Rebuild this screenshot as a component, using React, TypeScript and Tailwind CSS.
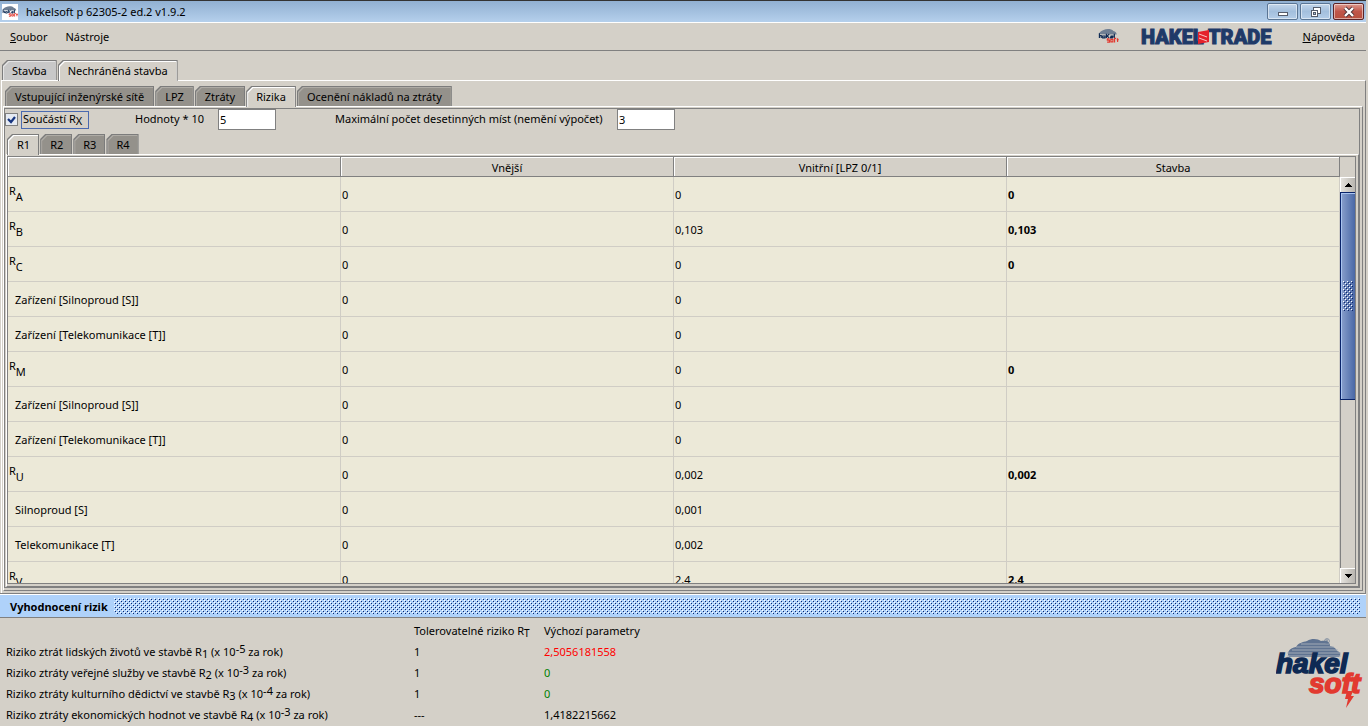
import React, { useId, useState } from "react";

type Risk = {
  label: string;
  sub?: string;
  outer: string;
  inner: string;
  total: string;
};

const ROWS: Risk[] = [
  { label: "R", sub: "A", outer: "0", inner: "0", total: "0" },
  { label: "R", sub: "B", outer: "0", inner: "0,103", total: "0,103" },
  { label: "R", sub: "C", outer: "0", inner: "0", total: "0" },
  { label: "Zařízení [Silnoproud [S]]", outer: "0", inner: "0", total: "" },
  { label: "Zařízení [Telekomunikace [T]]", outer: "0", inner: "0", total: "" },
  { label: "R", sub: "M", outer: "0", inner: "0", total: "0" },
  { label: "Zařízení [Silnoproud [S]]", outer: "0", inner: "0", total: "" },
  { label: "Zařízení [Telekomunikace [T]]", outer: "0", inner: "0", total: "" },
  { label: "R", sub: "U", outer: "0", inner: "0,002", total: "0,002" },
  { label: "Silnoproud [S]", outer: "0", inner: "0,001", total: "" },
  { label: "Telekomunikace [T]", outer: "0", inner: "0,002", total: "" },
  { label: "R", sub: "V", outer: "0", inner: "2,4", total: "2,4" },
];

const SUMMARY = [
  { text: "Riziko ztrát lidských životů ve stavbě R", n: "1", exp: "-5", tol: "1", val: "2,5056181558", color: "text-[#ff0000]" },
  { text: "Riziko ztráty veřejné služby ve stavbě R", n: "2", exp: "-3", tol: "1", val: "0", color: "text-[#008000]" },
  { text: "Riziko ztráty kulturního dědictví ve stavbě R", n: "3", exp: "-4", tol: "1", val: "0", color: "text-[#008000]" },
  { text: "Riziko ztráty ekonomických hodnot ve stavbě R", n: "4", exp: "-3", tol: "---", val: "1,4182215662", color: "text-black" },
];

const CUT = "[clip-path:polygon(5px_0,100%_0,100%_100%,0_100%,0_5px)]";

type TabProps = { label: string; active: boolean; light?: boolean; pad: string; onClick: () => void };

function Tab({ label, active, light, pad, onClick }: TabProps) {
  const fill = active ? "bg-[#d4d0c8] pb-px" : light ? "bg-[#c8c8c8]" : "bg-[#94918b]";
  const edge = active ? "bg-white" : light ? "bg-[#e4e4e4]" : "bg-[#aeaba5]";
  return (
    <button
      type="button"
      role="tab"
      aria-selected={active}
      onClick={onClick}
      className={`flex bg-[#7c7c7c] px-px pt-px ${CUT} ${active ? "-mb-px h-[21px]" : "h-5"}`}
    >
      <span className={`flex h-full pl-px pt-px ${edge} ${CUT}`}>
        <span className={`flex h-full items-center whitespace-nowrap ${pad} ${fill} ${CUT}`}>{label}</span>
      </span>
    </button>
  );
}

type TabsProps = { items: string[]; start: number; light?: boolean; pad?: string; label: string };

function Tabs({ items, start, light, pad = "pl-[8px] pr-[9px]", label }: TabsProps) {
  const [current, setCurrent] = useState(start);
  return (
    <div role="tablist" aria-label={label} className="flex items-start gap-px">
      {items.map((t, i) => (
        <Tab key={t} label={t} active={i === current} light={light} pad={pad} onClick={() => setCurrent(i)} />
      ))}
    </div>
  );
}

function HakelLogo({ className }: { className: string }) {
  return (
    <svg viewBox="0 0 90 72" className={className} aria-label="hakel soft" role="img">
      <g fill="#5f7391">
        <path d="M13 21c-3-5 1-9 7-10 2-4 7-5 11-6 5-3 11-2 14 0 6-1 9 1 9 5 5 1 7 4 7 5 4 1 4 4 2 6z" />
        <path d="M11 17h54M11 20h54M16 14h46M20 11h38M25 8h28" stroke="#a9b1bb" strokeWidth="0.9" />
      </g>
      <circle cx="51" cy="5" r="2.4" fill="none" stroke="#667993" strokeWidth="0.7" />
      <path d="M50.300 6.300v-2.600h1.200v1.200h-1.200M51.200 5l.7 1.300" fill="none" stroke="#667993" strokeWidth="0.5" />
      <g fontFamily="Liberation Sans, sans-serif" fontWeight="700" fontStyle="italic" fontSize="28">
        <text x="0" y="37" fill="#0e2a54" stroke="#0e2a54" strokeWidth="1.600">hakel</text>
        <text x="33" y="57" fill="#e23a30" stroke="#e23a30" strokeWidth="1.600">soft</text>
      </g>
      <path d="M71 55h6l-2 5h3l-8 12 2-9h-3z" fill="#e23a30" />
    </svg>
  );
}

function HakelMark({ className }: { className: string }) {
  return (
    <svg viewBox="0 0 90 72" className={className} aria-hidden="true">
      <path d="M4 26c0-8 10-14 20-18 12-7 34-6 42 4 9 2 14 8 14 15z" fill="#6f7f93" />
      <path d="M6 22v20M6 32h8v10M20 34h10v8H20zM36 24v18M48 26l-9 8 9 8M54 34h10v4H54v4h10M70 24v18" fill="none" stroke="#0e2a54" strokeWidth="5" />
      <path d="M50 46h-10v6h9v8h-10M55 48h9v11h-9zM78 44h-7v18M84 44v16M80 50h9" fill="none" stroke="#e23a30" strokeWidth="5" />
    </svg>
  );
}

function TradeLogo() {
  return (
    <svg viewBox="0 0 134 20" className="h-5 w-[134px]" role="img" aria-label="HAKEL TRADE">
      <g fill="#1f3a68" stroke="#1f3a68" strokeWidth="1" fontFamily="Roboto, Liberation Sans, sans-serif" fontWeight="900" fontSize="20">
        <text x="0" y="17">HAKEL</text>
        <text x="67" y="17">TRADE</text>
      </g>
      <path d="M57 5l11-2v12l-11 2z" fill="#e5222b" />
      <path d="M58 7l8 3M58 11l8 3" stroke="#f7c6c4" strokeWidth="1" />
    </svg>
  );
}

function WindowButton({ label, close, children }: { label: string; close?: boolean; children: React.ReactNode }) {
  return (
    <button
      type="button"
      aria-label={label}
      className={`flex h-[17px] w-[31px] items-center justify-center rounded-[2px] border shadow-[inset_0_0_0_1px_rgba(255,255,255,0.5)] ${
        close ? "border-[#5c2326] bg-linear-to-b from-[#dc9a90] via-[#c0564a] to-[#b8503f]" : "border-[#5a7594] bg-linear-to-b from-[#c3d6ea] via-[#a3bfdd] to-[#b4cde8]"
      }`}
    >
      <svg viewBox="0 0 14 12" className="h-3 w-[14px]" aria-hidden="true">{children}</svg>
    </button>
  );
}

function ScrollArrow({ down }: { down?: boolean }) {
  return (
    <button
      type="button"
      aria-label={down ? "Dolů" : "Nahoru"}
      className="flex h-[15px] w-full shrink-0 items-center justify-center border-l border-t border-white bg-linear-to-r from-[#e4e2dd] to-[#b9b6b0]"
    >
      <svg viewBox="0 0 8 4" className="h-1 w-2" shapeRendering="crispEdges" aria-hidden="true">
        <path d={down ? "M0 0h8L4 4z" : "M0 4h8L4 0z"} />
      </svg>
    </button>
  );
}

function Bumps({ className }: { className: string }) {
  const id = useId();
  return (
    <svg className={className} shapeRendering="crispEdges" aria-hidden="true">
      <defs>
        <pattern id={id} width="4" height="4" patternUnits="userSpaceOnUse">
          <path d="M0 0h1v1h-1zM2 2h1v1h-1z" fill="#fff" />
          <path d="M1 1h1v1h-1zM3 3h1v1h-1z" fill="#0a246a" />
        </pattern>
      </defs>
      <rect width="100%" height="100%" fill={`url(#${id})`} />
    </svg>
  );
}

const CELL = "border-b border-r border-[#d0cdc5] px-0 pb-0 pt-[2px]";

export default function App() {
  const [checked, setChecked] = useState(true);
  return (
    <div className="flex h-screen min-h-[480px] flex-col bg-[#d4d0c8] pr-[2px] font-['Noto_Sans','Open_Sans',sans-serif] text-[11px] leading-4 text-black">
      <header className="flex h-[22px] shrink-0 items-center border-t border-[#333] bg-linear-to-b from-[#91b0d2] to-[#b5d0ec] pl-[2px] pr-[2px]">
        <span className="flex size-4 items-center bg-white">
          <HakelMark className="size-4" />
        </span>
        <h1 className="ml-2 flex-1">hakelsoft p 62305-2 ed.2 v1.9.2</h1>
        <div className="flex gap-[2px]">
          <WindowButton label="Minimalizovat"><rect x="2.500" y="6.500" width="9" height="3" fill="#fff" stroke="#555c6b" /></WindowButton>
          <WindowButton label="Obnovit">
            <rect x="4.500" y="1.500" width="7" height="6" fill="#fff" stroke="#555c6b" />
            <rect x="2.500" y="4.500" width="6" height="6" fill="#fff" stroke="#555c6b" />
            <rect x="4.500" y="6.500" width="2" height="2" fill="#a3bfdd" stroke="#555c6b" />
          </WindowButton>
          <WindowButton label="Zavřít" close>
            <path d="M3 2l8 8M11 2l-8 8" stroke="#4c3238" strokeWidth="4" />
            <path d="M3 2l8 8M11 2l-8 8" stroke="#fff" strokeWidth="2.400" />
          </WindowButton>
        </div>
      </header>

      <nav className="flex h-[29px] shrink-0 items-center border-b border-t border-b-[#808080] border-t-white pl-[10px] pr-[11px]">
        <button type="button"><u>S</u>oubor</button>
        <button type="button" className="ml-[18px]">Nástroje</button>
        <span className="ml-auto"><HakelMark className="h-[17px] w-[21px]" /></span>
        <span className="ml-[22px]"><TradeLogo /></span>
        <button type="button" className="ml-7"><u>N</u>ápověda</button>
      </nav>

      <main className="flex min-h-0 flex-1 flex-col pl-px pt-[9px]">
        <div className="pl-px"><Tabs label="Stavby" items={["Stavba", "Nechráněná stavba"]} start={1} light /></div>
        <div className="flex min-h-0 flex-1 flex-col border-l border-r border-t border-l-white border-r-[#808080] border-t-white pb-[2px] pl-px pr-[2px] pt-[5px]">
          <div className="pl-[2px]"><Tabs label="Parametry" items={["Vstupující inženýrské sítě", "LPZ", "Ztráty", "Rizika", "Ocenění nákladů na ztráty"]} start={3} /></div>
          <div className="flex min-h-0 flex-1 flex-col border border-b-[#808080] border-l-white border-r-[#808080] border-t-white pb-[2px] pr-[2px] pt-px">
            <div className="flex min-h-0 flex-1 flex-col border border-[#808080]">
              <div className="flex h-[21px] items-center">
                <label className="flex items-center">
                  <span className="grid size-[13px] place-items-center border border-[#808080] bg-[#e6ebf3]">
                    <input type="checkbox" checked={checked} onChange={(e) => setChecked(e.target.checked)} className="peer col-start-1 row-start-1 size-[11px] appearance-none" />
                    <svg viewBox="0 0 9 9" className="pointer-events-none invisible col-start-1 row-start-1 size-[9px] peer-checked:visible" aria-hidden="true">
                      <path d="M1 4l3 3 4-5" fill="none" stroke="#17357f" strokeWidth="2.200" />
                    </svg>
                  </span>
                  <span className="ml-[3px] flex h-[18px] w-[68px] items-center border border-[#4a6ab0] pb-px pl-px">
                    <span>Součástí R<sub className="static align-[-2px] text-[11px] leading-none">X</sub></span>
                  </span>
                </label>
                <label htmlFor="exp" className="ml-[46px] w-[83px] pb-[2px]">Hodnoty * 10</label>
                <input id="exp" defaultValue="5" className="h-[21px] w-[58px] border border-[#808080] bg-white px-px" />
                <label htmlFor="places" className="ml-[59px] w-[282px] pb-[2px]">Maximální počet desetinných míst (nemění výpočet)</label>
                <input id="places" defaultValue="3" className="h-[21px] w-[58px] border border-[#808080] bg-white px-px" />
              </div>
              <div className="pl-[2px] pt-1"><Tabs label="Rizika" items={["R1", "R2", "R3", "R4"]} start={0} pad="px-[8px]" /></div>
              <div className="ml-px flex min-h-0 flex-1 border border-b-[#808080] border-l-white border-r-[#808080] border-t-white pb-[2px] pr-[2px] pt-px">
                <div className="flex min-h-0 flex-1 border border-[#808080]">
                  <div className="min-h-0 flex-1 overflow-hidden bg-[#ece9d8]">
                    <table className="w-full table-fixed border-separate border-spacing-0">
                      <thead>
                        <tr className="h-5">
                          {["", "Vnější", "Vnitřní [LPZ 0/1]", "Stavba"].map((h) => (
                            <th key={h} className="border-b border-r border-[#808080] bg-[#d4d0c8] px-0 pb-0 pt-[2px] font-normal shadow-[inset_1px_1px_0_#fff]">{h}</th>
                          ))}
                        </tr>
                      </thead>
                      <tbody>
                        {ROWS.map((r, i) => (
                          <tr key={i} className="h-[35px]">
                            {r.sub ? (
                              <td className="border-b border-r border-[#d0cdc5] px-0 pb-1 pt-0 pl-px">
                                R<sub className="static align-[-6px] text-[11px] leading-none">{r.sub}</sub>
                              </td>
                            ) : (
                              <td className={`${CELL} pl-[7px]`}>{r.label}</td>
                            )}
                            <td className={`${CELL} pl-px`}>{r.outer}</td>
                            <td className={`${CELL} pl-px`}>{r.inner}</td>
                            <td className={`${CELL} pl-px font-bold`}>{r.total}</td>
                          </tr>
                        ))}
                      </tbody>
                    </table>
                  </div>
                  <div className="flex w-[15px] flex-col pt-5">
                    <ScrollArrow />
                    <div className="flex min-h-0 flex-1 flex-col border-l border-[#808080]">
                      <div className="-ml-px flex h-[208px] items-center justify-center border-y border-l border-[#0a246a] bg-linear-to-r from-[#8aa0cc] to-[#4a68a6] shadow-[inset_1px_1px_0_#a9c4f0]">
                        <Bumps className="h-[30px] w-[10px]" />
                      </div>
                    </div>
                    <ScrollArrow down />
                  </div>
                </div>
              </div>
            </div>
          </div>
        </div>
      </main>

      <section className="shrink-0 border-t border-[#808080] pb-px">
        <div className="flex h-6 items-center border-b border-t border-b-[#808080] border-t-white bg-[#afd2fa] pl-[10px] pr-[6px]">
          <h2 className="pt-px font-bold">Vyhodnocení rizik</h2>
          <Bumps className="ml-[6px] h-4 min-w-0 flex-1" />
        </div>
        <div className="flex pl-[6px] pt-[2px]">
          <table className="table-fixed">
            <thead>
              <tr className="h-[21px] text-left">
                <th className="w-[408px] p-0" />
                <th className="w-[130px] p-0 font-normal">Tolerovatelné riziko R<sub className="static align-[-2px] text-[10px] leading-none">T</sub></th>
                <th className="w-[130px] p-0 font-normal">Výchozí parametry</th>
              </tr>
            </thead>
            <tbody>
              {SUMMARY.map((s) => (
                <tr key={s.n} className="h-[21px]">
                  <td className="p-0">
                    {s.text}
                    <sub className="static align-[-2px] text-[11px] leading-none">{s.n}</sub> (x 10
                    <sup className="static align-[3px] text-[11px] leading-none">{s.exp}</sup> za rok)
                  </td>
                  <td className="p-0">{s.tol}</td>
                  <td className={`p-0 ${s.color}`}>{s.val}</td>
                </tr>
              ))}
            </tbody>
          </table>
          <HakelLogo className="ml-auto mt-[16px] h-[72px] w-[90px]" />
        </div>
      </section>
    </div>
  );
}
